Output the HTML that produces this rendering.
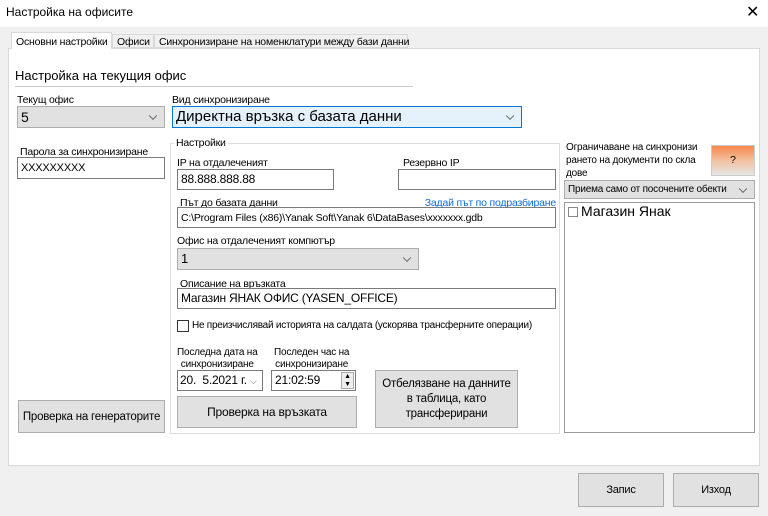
<!DOCTYPE html>
<html><head><meta charset="utf-8"><style>
*{box-sizing:border-box;margin:0;padding:0}
body{width:768px;height:516px;background:#f0f0f0;font-family:"Liberation Sans",sans-serif;font-size:10.5px;letter-spacing:-0.2px;color:#000;position:relative;overflow:hidden}
.a{position:absolute;white-space:nowrap}
.in{position:absolute;background:#fff;border:1px solid #7a7a7a;padding:2px 3px;font-size:12px;white-space:nowrap;overflow:hidden}
.cb{position:absolute;background:#e1e1e1;border:1px solid #adadad;padding:2px 3px;font-size:13px;white-space:nowrap}
.cb:after{content:"";position:absolute;right:8px;top:50%;width:5px;height:5px;border-right:1px solid #666;border-bottom:1px solid #666;transform:translateY(-70%) rotate(45deg)}
.bt{position:absolute;background:#e1e1e1;border:1px solid #adadad;display:flex;align-items:center;justify-content:center;text-align:center;font-size:12px}
</style></head><body>
<div class="a" style="left:0;top:0;width:768px;height:27px;background:#fff"></div>
<div class="a" style="left:6px;top:5px;font-size:12px;letter-spacing:0">Настройка на офисите</div>
<div class="a" style="left:746px;top:2px;font-size:16px">✕</div>
<div class="a" style="left:8px;top:48px;width:752px;height:418px;background:#fff;border:1px solid #d9d9d9"></div>
<div class="a" style="left:11px;top:32px;width:101px;height:17px;background:#fff;border:1px solid #d9d9d9;border-bottom:none;padding:3px 4px">Основни настройки</div>
<div class="a" style="left:112px;top:34px;width:42px;height:14px;background:#f0f0f0;border:1px solid #d9d9d9;padding:1px 4px">Офиси</div>
<div class="a" style="left:154px;top:34px;width:254px;height:14px;background:#f0f0f0;border:1px solid #d9d9d9;padding:1px 4px">Синхронизиране на номенклатури между бази данни</div>
<div class="a" style="left:15px;top:68px;font-size:13px;letter-spacing:0">Настройка на текущия офис</div>
<div class="a" style="left:15px;top:86px;width:398px;height:1px;background:#ccc"></div>
<div class="a" style="left:17px;top:94px">Текущ офис</div>
<div class="cb" style="left:17px;top:106px;width:148px;height:22px;font-size:14px">5</div>
<div class="a" style="left:172px;top:94px">Вид синхронизиране</div>
<div class="cb" style="left:172px;top:106px;width:350px;height:22px;background:#e5f1fb;border-color:#0078d7;font-size:15px;padding:1px 3px;letter-spacing:0">Директна връзка с базата данни</div>
<div class="a" style="left:20px;top:146px">Парола за синхронизиране</div>
<div class="in" style="left:17px;top:157px;width:148px;height:22px;font-size:11px;padding-top:4px">XXXXXXXXX</div>
<div class="a" style="left:170px;top:143px;width:390px;height:291px;border:1px solid #ddd"></div>
<div class="a" style="left:174px;top:137px;background:#fff;padding:0 2px">Настройки</div>
<div class="a" style="left:177px;top:157px">IP на отдалеченият</div>
<div class="in" style="left:177px;top:169px;width:157px;height:21px">88.888.888.88</div>
<div class="a" style="left:403px;top:157px">Резервно IP</div>
<div class="in" style="left:398px;top:169px;width:158px;height:21px"></div>
<div class="a" style="left:180px;top:197px">Път до базата данни</div>
<div class="a" style="left:556px;top:197px;transform:translateX(-100%);color:#0b6bd6;text-decoration:underline">Задай път по подразбиране</div>
<div class="in" style="left:177px;top:207px;width:379px;height:21px;font-size:10.5px;padding-top:4px">C:\Program Files (x86)\Yanak Soft\Yanak 6\DataBases\xxxxxxx.gdb</div>
<div class="a" style="left:177px;top:235px">Офис на отдалеченият компютър</div>
<div class="cb" style="left:177px;top:248px;width:242px;height:22px">1</div>
<div class="a" style="left:180px;top:278px">Описание на връзката</div>
<div class="in" style="left:177px;top:288px;width:379px;height:21px">Магазин ЯНАК ОФИС (YASEN_OFFICE)</div>
<div class="a" style="left:177px;top:320px;width:12px;height:12px;border:1px solid #333;background:#fff"></div>
<div class="a" style="left:192px;top:320px;font-size:10px;letter-spacing:-0.25px">Не преизчислявай историята на салдата (ускорява трансферните операции)</div>
<div class="a" style="left:177px;top:347px;text-align:center;line-height:12px;font-size:10px">Последна дата на<br>синхронизиране</div>
<div class="a" style="left:274px;top:347px;text-align:center;line-height:12px;font-size:10px">Последен час на<br>синхронизиране</div>
<div class="in" style="left:177px;top:370px;width:86px;height:21px;padding:2px 2px">20.&nbsp; 5.2021 г. <span style="font-size:9px;color:#666">⌵</span></div>
<div class="in" style="left:271px;top:370px;width:85px;height:21px">21:02:59</div>
<div class="a" style="left:341px;top:372px;width:13px;height:17px;border:1px solid #aaa;background:#eee;font-size:7px;line-height:8px;text-align:center">▲<br>▼</div>
<div class="bt" style="left:177px;top:396px;width:180px;height:32px">Проверка на връзката</div>
<div class="bt" style="left:375px;top:370px;width:143px;height:58px;line-height:15px;font-size:11.5px">Отбелязване на данните<br>в таблица, като<br>трансферирани</div>
<div class="bt" style="left:18px;top:400px;width:147px;height:33px;font-size:11.5px">Проверка на генераторите</div>
<div class="a" style="left:566px;top:141px;line-height:13px;font-size:10px">Ограничаване на синхронизи<br>рането на документи по скла<br>дове</div>
<div class="a" style="left:711px;top:145px;width:44px;height:31px;border:1px solid #ccc;background:linear-gradient(#f6874a,#f3c0a0 50%,#e6e6e6);text-align:center;line-height:29px">?</div>
<div class="cb" style="left:564px;top:180px;width:191px;height:19px;font-size:10px;padding-top:3px">Приема само от посочените обекти</div>
<div class="a" style="left:564px;top:202px;width:191px;height:231px;background:#fff;border:1px solid #999"></div>
<div class="a" style="left:568px;top:207px;width:10px;height:10px;border:1px solid #888"></div>
<div class="a" style="left:581px;top:203px;font-size:14px;letter-spacing:0">Магазин Янак</div>
<div class="bt" style="left:578px;top:473px;width:86px;height:34px;font-size:11px">Запис</div>
<div class="bt" style="left:673px;top:473px;width:86px;height:34px;font-size:11px">Изход</div>
</body></html>
